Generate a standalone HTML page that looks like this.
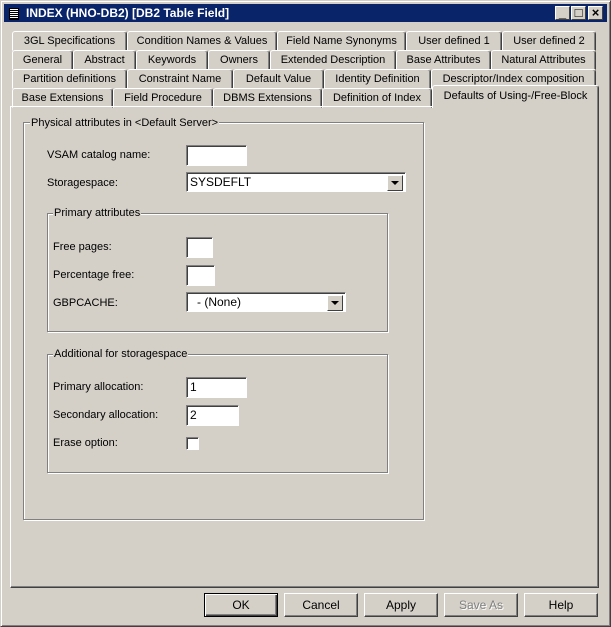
<!DOCTYPE html>
<html><head><style>
*{box-sizing:border-box;margin:0;padding:0}
body{width:611px;height:627px;overflow:hidden;background:#d4d0c8;font-family:"Liberation Sans",sans-serif;font-size:11px;color:#000;position:relative}
.a{position:absolute}
#win{left:0;top:0;width:611px;height:627px;border:1px solid;border-color:#d4d0c8 #404040 #404040 #d4d0c8;box-shadow:inset 1px 1px #fff,inset -1px -1px #808080}
#title{left:4px;top:4px;width:603px;height:18px;background:#0a246a;color:#fff;font-weight:bold;font-size:12px;line-height:18px;padding-left:22px}
.tb{top:6px;width:15px;height:14px;background:#d4d0c8;border:1px solid;border-color:#fff #404040 #404040 #fff;color:#000;font-size:13px;line-height:12px;text-align:center;font-weight:bold}
.tab{height:20px;border:1px solid;border-color:#fff #404040 transparent #fff;border-radius:3px 3px 0 0;text-align:center;line-height:18px;white-space:nowrap;background:#d4d0c8;box-shadow:inset -1px 0 #808080}
#panel{left:10px;top:106px;width:589px;height:482px;border:1px solid;border-color:#fff #404040 #404040 #fff;box-shadow:inset -1px -1px #808080}
.grp{border:1px solid #808080;box-shadow:1px 1px #fff,inset 1px 1px #fff}
.gl{background:#d4d0c8;padding:0 1px}
.inp{background:#fff;border:1px solid;border-color:#808080 #fff #fff #808080;box-shadow:inset 1px 1px #404040;padding-left:3px;line-height:19px;font-size:12px}
.dd{position:absolute;right:2px;top:2px;width:16px;height:16px;background:#d4d0c8;border:1px solid;border-color:#fff #404040 #404040 #fff}
.dd:after{content:"";position:absolute;left:3px;top:5px;border:4px solid transparent;border-top:4px solid #000;border-bottom:0}
.btn{top:593px;width:74px;height:24px;border:1px solid;border-color:#fff #404040 #404040 #fff;box-shadow:inset -1px -1px #808080;text-align:center;line-height:22px;font-size:12px}
</style></head><body>
<div id="win" class="a"></div>
<div id="title" class="a">INDEX (HNO-DB2) [DB2 Table Field]</div>
<div class="a" style="left:9px;top:8px;width:10px;height:12px;background:#fff;border:1px solid #000;background-image:repeating-linear-gradient(#fff 0 1px,#000 1px 2px)"></div>
<div class="a tb" style="left:555px">_</div>
<div class="a tb" style="left:571px">□</div>
<div class="a tb" style="left:588px">×</div>

<div class="a tab" style="left:12px;top:31px;width:115px">3GL Specifications</div>
<div class="a tab" style="left:127px;top:31px;width:150px">Condition Names &amp; Values</div>
<div class="a tab" style="left:277px;top:31px;width:129px">Field Name Synonyms</div>
<div class="a tab" style="left:406px;top:31px;width:96px">User defined 1</div>
<div class="a tab" style="left:502px;top:31px;width:94px">User defined 2</div>

<div class="a tab" style="left:12px;top:50px;width:61px">General</div>
<div class="a tab" style="left:73px;top:50px;width:63px">Abstract</div>
<div class="a tab" style="left:136px;top:50px;width:72px">Keywords</div>
<div class="a tab" style="left:208px;top:50px;width:62px">Owners</div>
<div class="a tab" style="left:270px;top:50px;width:126px">Extended Description</div>
<div class="a tab" style="left:396px;top:50px;width:95px">Base Attributes</div>
<div class="a tab" style="left:491px;top:50px;width:105px">Natural Attributes</div>

<div class="a tab" style="left:12px;top:69px;width:115px">Partition definitions</div>
<div class="a tab" style="left:127px;top:69px;width:106px">Constraint Name</div>
<div class="a tab" style="left:233px;top:69px;width:91px">Default Value</div>
<div class="a tab" style="left:324px;top:69px;width:107px">Identity Definition</div>
<div class="a tab" style="left:431px;top:69px;width:165px">Descriptor/Index composition</div>

<div class="a tab" style="left:12px;top:88px;width:101px">Base Extensions</div>
<div class="a tab" style="left:113px;top:88px;width:100px">Field Procedure</div>
<div class="a tab" style="left:213px;top:88px;width:109px">DBMS Extensions</div>
<div class="a tab" style="left:322px;top:88px;width:110px">Definition of Index</div>

<div id="panel" class="a"></div>
<div class="a tab" style="left:432px;top:85px;width:167px;height:23px;line-height:20px;border-bottom:none;z-index:2">Defaults of Using-/Free-Block</div>

<div class="a grp" style="left:23px;top:122px;width:401px;height:398px"></div>
<div class="a gl" style="left:30px;top:117px">Physical attributes in &lt;Default Server&gt;</div>
<div class="a" style="left:47px;top:149px">VSAM catalog name:</div>
<div class="a inp" style="left:186px;top:145px;width:61px;height:21px"></div>
<div class="a" style="left:47px;top:177px">Storagespace:</div>
<div class="a inp" style="left:186px;top:172px;width:220px;height:20px">SYSDEFLT<div class="dd"></div></div>

<div class="a grp" style="left:47px;top:213px;width:341px;height:119px"></div>
<div class="a gl" style="left:53px;top:207px">Primary attributes</div>
<div class="a" style="left:53px;top:241px">Free pages:</div>
<div class="a inp" style="left:186px;top:237px;width:27px;height:21px"></div>
<div class="a" style="left:53px;top:269px">Percentage free:</div>
<div class="a inp" style="left:186px;top:265px;width:29px;height:21px"></div>
<div class="a" style="left:53px;top:297px">GBPCACHE:</div>
<div class="a inp" style="left:186px;top:292px;width:160px;height:20px;padding-left:10px">- (None)<div class="dd"></div></div>

<div class="a grp" style="left:47px;top:354px;width:341px;height:119px"></div>
<div class="a gl" style="left:53px;top:348px">Additional for storagespace</div>
<div class="a" style="left:53px;top:381px">Primary allocation:</div>
<div class="a inp" style="left:186px;top:377px;width:61px;height:21px">1</div>
<div class="a" style="left:53px;top:409px">Secondary allocation:</div>
<div class="a inp" style="left:186px;top:405px;width:53px;height:21px">2</div>
<div class="a" style="left:53px;top:437px">Erase option:</div>
<div class="a inp" style="left:186px;top:437px;width:13px;height:13px"></div>

<div class="a btn" style="left:204px;border:1px solid #000;box-shadow:inset 1px 1px #fff,inset -1px -1px #404040,inset -2px -2px #808080">OK</div>
<div class="a btn" style="left:284px">Cancel</div>
<div class="a btn" style="left:364px">Apply</div>
<div class="a btn" style="left:444px;color:#808080;text-shadow:1px 1px #fff">Save As</div>
<div class="a btn" style="left:524px">Help</div>
</body></html>
